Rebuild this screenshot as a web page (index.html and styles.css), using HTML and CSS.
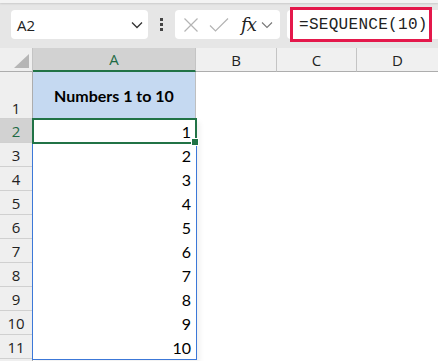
FILE: index.html
```html
<!DOCTYPE html>
<html>
<head>
<meta charset="utf-8">
<link rel="stylesheet" href="styles.css">
</head>
<body>
<div class="app">
  <div class="topband"></div>
  <div class="toolbar">
    <div class="namebox">
      <span class="nb-text">A2</span>
      <svg class="chev" width="12" height="8" viewBox="0 0 12 8"><path d="M1 1.5 L6 6.5 L11 1.5" fill="none" stroke="#333" stroke-width="1.3"/></svg>
    </div>
    <div class="dots"><i></i><i></i><i></i></div>
    <div class="fnbox">
      <svg width="16" height="16" viewBox="0 0 16 16"><path d="M1.5 1.5 L14.5 14.5 M14.5 1.5 L1.5 14.5" stroke="#b4b4b4" stroke-width="1.2" fill="none"/></svg>
      <svg width="20" height="16" viewBox="0 0 20 16"><path d="M1 8.5 L6.5 14 L19 1.5" stroke="#b4b4b4" stroke-width="1.2" fill="none"/></svg>
      <span class="fx">fx</span>
      <svg width="12" height="8" viewBox="0 0 12 8"><path d="M1 1.5 L6 6.5 L11 1.5" fill="none" stroke="#777" stroke-width="1.1"/></svg>
    </div>
    <div class="formula">
      <div class="formula-mark"></div>
      <span class="ftext">=SEQUENCE(10)</span>
    </div>
  </div>
  <div class="sheet">
    <div class="corner"><div class="tri"></div></div>
    <div class="ch ch-sel">A</div>
    <div class="ch">B</div>
    <div class="ch">C</div>
    <div class="ch ch-last">D</div>

    <div class="rh rh-1">1</div>
    <div class="c a1">Numbers 1 to 10</div>
    <div class="c"></div><div class="c"></div><div class="c"></div>

    <div class="rh rh-sel">2</div><div class="c num">1</div><div class="c"></div><div class="c"></div><div class="c"></div>
    <div class="rh">3</div><div class="c num">2</div><div class="c"></div><div class="c"></div><div class="c"></div>
    <div class="rh">4</div><div class="c num">3</div><div class="c"></div><div class="c"></div><div class="c"></div>
    <div class="rh">5</div><div class="c num">4</div><div class="c"></div><div class="c"></div><div class="c"></div>
    <div class="rh">6</div><div class="c num">5</div><div class="c"></div><div class="c"></div><div class="c"></div>
    <div class="rh">7</div><div class="c num">6</div><div class="c"></div><div class="c"></div><div class="c"></div>
    <div class="rh">8</div><div class="c num">7</div><div class="c"></div><div class="c"></div><div class="c"></div>
    <div class="rh">9</div><div class="c num">8</div><div class="c"></div><div class="c"></div><div class="c"></div>
    <div class="rh">10</div><div class="c num">9</div><div class="c"></div><div class="c"></div><div class="c"></div>
    <div class="rh">11</div><div class="c num">10</div><div class="c"></div><div class="c"></div><div class="c"></div>
    <div class="rh"></div><div class="c"></div><div class="c"></div><div class="c"></div><div class="c"></div>

    <div class="spill"></div>
    <div class="selection"><div class="handle"></div></div>
  </div>
</div>
</body>
</html>
```
FILE: styles.css
```css
html, body {
  margin: 0;
  padding: 0;
  background: #ffffff;
}
.app {
  width: 438px;
  height: 361px;
  overflow: hidden;
  position: relative;
  font-family: "Open Sans", "Noto Sans", sans-serif;
}
.topband {
  position: absolute;
  left: 0; top: 0; right: 0;
  height: 3px;
  background: #f3f3f3;
  box-shadow: 0 1px 2px rgba(0,0,0,0.12);
}
.toolbar {
  height: 48px;
  background: #e6e6e6;
  display: flex;
  align-items: flex-start;
  padding-top: 10px;
  box-sizing: border-box;
}
.namebox {
  margin-left: 11px;
  width: 137px;
  height: 29px;
  background: #fff;
  border-radius: 4px;
  display: flex;
  align-items: center;
  justify-content: space-between;
  padding: 0 5px 0 6px;
  box-sizing: border-box;
}
.nb-text {
  font-size: 15px;
  color: #222;
}
.dots {
  width: 27px;
  height: 29px;
  display: flex;
  flex-direction: column;
  align-items: center;
  justify-content: center;
  gap: 2px;
}
.dots i {
  display: block;
  width: 3px;
  height: 3px;
  background: #444;
}
.fnbox {
  width: 105px;
  height: 29px;
  background: #fff;
  border-radius: 4px;
  display: flex;
  align-items: center;
  padding-left: 8px;
  box-sizing: border-box;
  gap: 10px;
}
.fx {
  font-family: "DejaVu Serif", "Liberation Serif", serif;
  font-style: italic;
  font-size: 18px;
  color: #222;
  margin-left: 2px;
  margin-right: -5px;
  letter-spacing: -1px;
}
.formula {
  margin-left: 7px;
  flex: 1;
  height: 29px;
  background: #fff;
  border-radius: 4px 0 0 4px;
  position: relative;
  display: flex;
  align-items: center;
}
.ftext {
  font-family: "Liberation Mono", "DejaVu Sans Mono", monospace;
  font-size: 16px;
  color: #222;
  margin-left: 12px;
  letter-spacing: 0.3px;
  position: relative;
}
.formula-mark {
  position: absolute;
  left: 3px;
  top: -3px;
  width: 142px;
  height: 35px;
  border: 3px solid #e4184b;
  box-sizing: border-box;
}

.sheet {
  position: relative;
  display: grid;
  grid-template-columns: 33px 163px 81px 80px 81px;
  grid-template-rows: 24px 47px repeat(11, 24px);
  font-family: "Lato", "Liberation Sans", sans-serif;
  font-size: 16px;
  color: #000;
}
.corner {
  background: #efefef;
  border-right: 1px solid #c4c4c4;
  border-bottom: 1px solid #adadad;
  position: relative;
}
.tri {
  position: absolute;
  right: 3px;
  bottom: 3px;
  width: 0; height: 0;
  border-left: 15px solid transparent;
  border-bottom: 14px solid #b6b6b6;
}
.ch {
  background: #f0f0f0;
  border-right: 1px solid #c4c4c4;
  border-bottom: 1px solid #adadad;
  display: flex;
  align-items: center;
  justify-content: center;
  font-family: "Open Sans", "Noto Sans", sans-serif;
  font-size: 15px;
  color: #222;
}
.ch-sel {
  background: #d2d2d2;
  color: #1f6b45;
  border-bottom: 2px solid #217346;
}
.ch-last { border-right: none; }
.rh {
  background: #efefef;
  border-right: 1px solid #adadad;
  border-bottom: 1px solid #d0d0d0;
  display: flex;
  align-items: center;
  justify-content: center;
  font-family: "Open Sans", "Noto Sans", sans-serif;
  font-size: 15px;
  color: #222;
}
.rh-1 {
  align-items: flex-end;
  padding-bottom: 0;
}
.rh-sel {
  background: #d2d2d2;
  color: #1f6b45;
}
.c {
  background: #fff;
}
.a1 {
  background: #c5d9f1;
  font-weight: bold;
  display: flex;
  align-items: center;
  justify-content: center;
  border-right: 1px solid #bfbfbf;
}
.num {
  display: flex;
  align-items: center;
  justify-content: flex-end;
  padding-right: 5px;
}
.spill {
  position: absolute;
  left: 32px;
  top: 71px;
  width: 165px;
  height: 241px;
  box-sizing: border-box;
  border: 1px solid #3c78d8;
  box-shadow: 3px 3px 5px rgba(0,0,0,0.06);
}
.selection {
  position: absolute;
  left: 32px;
  top: 70px;
  width: 165px;
  height: 26px;
  box-sizing: border-box;
  border: 2px solid #217346;
}
.handle {
  position: absolute;
  right: -4px;
  bottom: -4px;
  width: 6px;
  height: 6px;
  background: #217346;
  border: 1px solid #fff;
}
```
